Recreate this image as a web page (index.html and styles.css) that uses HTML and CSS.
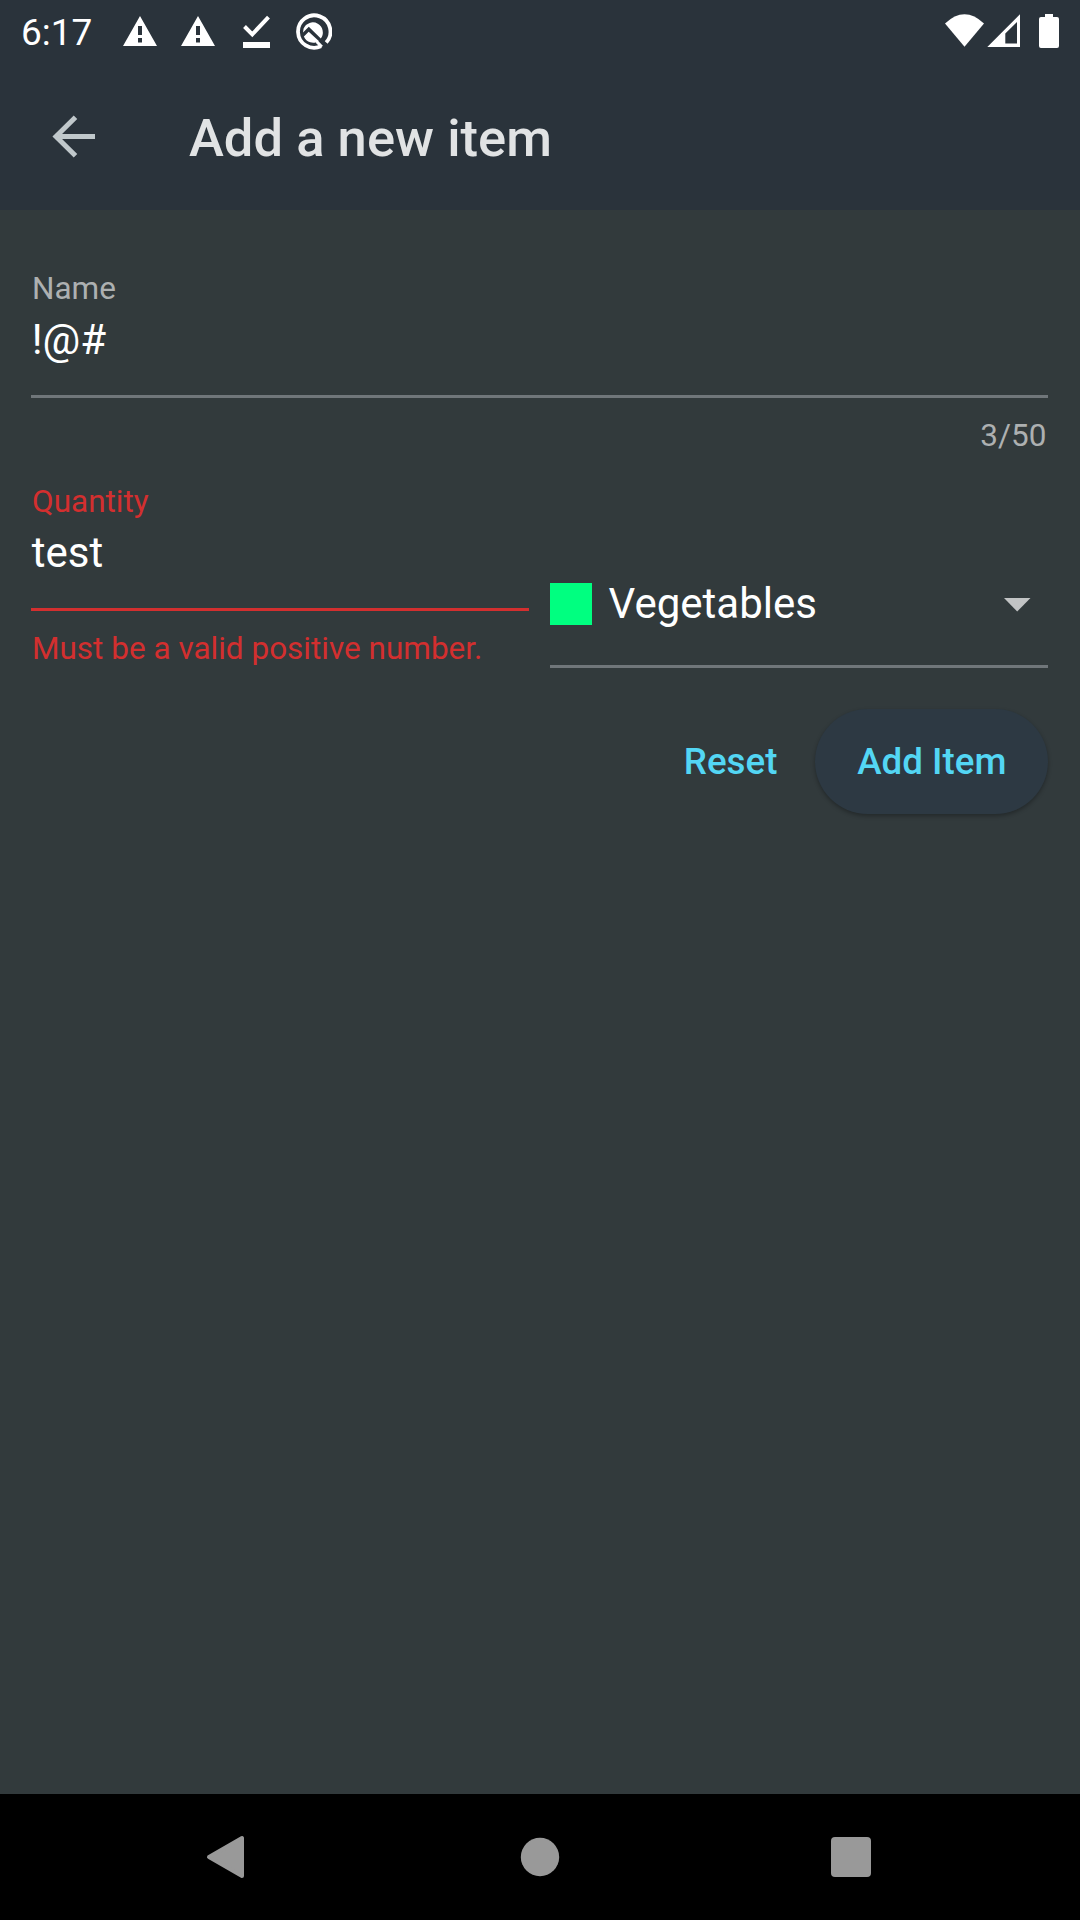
FILE: index.html
```html
<!DOCTYPE html>
<html lang="en">
<head>
<meta charset="utf-8">
<title>Add a new item</title>
<link rel="stylesheet" href="styles.css">
</head>
<body>
<div class="screen">
  <div class="status-bar">
    <span class="clock">6:17</span>
    <div class="notifications">
      <svg width="36" height="36" viewBox="122 13 36 36"><path fill="#fff" fill-rule="evenodd" d="M140 16 157 46H123ZM138 26V35H142V26ZM138 38V42.500H142V38Z"/></svg>
      <svg width="36" height="36" viewBox="122 13 36 36"><path fill="#fff" fill-rule="evenodd" d="M140 16 157 46H123ZM138 26V35H142V26ZM138 38V42.500H142V38Z"/></svg>
      <svg width="36" height="36" viewBox="238 13 36 36"><path fill="none" stroke="#fff" stroke-width="4" d="M244.500 26.500 252.300 34.300 268.500 17.200"/><path fill="#fff" d="M243 42H270V48H243Z"/></svg>
      <svg width="38" height="38" viewBox="295 12 38 38"><path fill="none" stroke="#fff" stroke-width="3.800" d="M322 45.300A16.200 16.200 0 1 1 327.200 41.500"/><path fill="none" stroke="#fff" stroke-width="3" d="M317.700 40.600 322.800 45.700"/><path fill="#fff" d="M304.600 27.500A10 10 0 1 1 321.800 37.400L309.800 25.700 304 31.500ZM309.700 30.700 319.800 40.100A10 10 0 0 1 304.900 35.500Z"/></svg>
    </div>
    <div class="system">
      <svg width="40" height="36" viewBox="944 13 40 36"><path fill="#fff" d="M945 23.500Q964.500 5 984 23.500L964.500 46.700Z"/></svg>
      <svg width="34" height="36" viewBox="987 13 34 36"><path fill="#fff" fill-rule="evenodd" d="M987.300 47 1020 14.300V47ZM1005.300 33.500V43.500H1017V22Z"/></svg>
      <svg width="20" height="36" viewBox="1039 13 20 36"><path fill="#fff" d="M1045 14H1053V17H1057Q1059 17 1059 19V46Q1059 48 1057 48H1041Q1039 48 1039 46V19Q1039 17 1041 17H1045Z"/></svg>
    </div>
  </div>
  <header class="app-bar">
    <svg class="back" width="44" height="44" viewBox="51 114 44 44"><path fill="none" stroke="#c0c8cb" stroke-width="5" d="M95 136.500H56M75.500 117.200 56 136.500 75.500 155.800"/></svg>
    <h1 class="title">Add a new item</h1>
  </header>
  <main class="form">
    <div class="field">
      <div class="label">Name</div>
      <div class="value">!@#</div>
      <div class="counter">3/50</div>
    </div>
    <div class="row">
      <div class="field invalid">
        <div class="label">Quantity</div>
        <div class="value">test</div>
        <div class="message">Must be a valid positive number.</div>
      </div>
      <div class="select">
        <span class="swatch"></span>
        <span class="option">Vegetables</span>
        <svg class="caret" width="27" height="14" viewBox="0 0 27 14"><path fill="#c2c4c5" d="M0 0H26.500L13.200 13.500Z"/></svg>
      </div>
    </div>
    <div class="actions">
      <span class="button text">Reset</span>
      <span class="button raised">Add Item</span>
    </div>
  </main>
  <nav class="nav-bar">
    <svg width="44" height="44" viewBox="203 1835 44 44"><path fill="#999" stroke="#999" stroke-width="4" stroke-linejoin="round" d="M209 1857 242 1838V1876Z"/></svg>
    <svg width="44" height="44" viewBox="0 0 44 44"><circle cx="24" cy="22" r="19.200" fill="#999"/></svg>
    <svg width="44" height="44" viewBox="829 1835 44 44"><rect x="831" y="1837" width="40" height="40" rx="4" fill="#999"/></svg>
  </nav>
</div>
</body>
</html>
```
FILE: styles.css
```css
* { box-sizing: border-box; }
body { margin: 0; font-family: Roboto, sans-serif; background: #323a3c; }
svg { display: block; flex: none; }
.screen { width: 1080px; height: 1920px; display: flex; flex-direction: column; background: #323a3c; overflow: hidden; }
.status-bar { height: 63px; display: flex; align-items: flex-start; padding: 12px 21px 0 21px; background: #2a333b; }
.clock { width: 101px; font-size: 37px; line-height: 42px; color: #fff; }
.notifications { display: flex; gap: 22px; padding-top: 1px; }
.notifications svg:last-child { margin: 0 0 0 -2px; }
.system { display: flex; gap: 3px; margin-left: auto; padding-top: 1px; }
.system svg:last-child { margin-left: 15px; }
.app-bar { height: 147px; display: flex; align-items: flex-start; padding: 51px 0 0 51px; background: #2a333b; }
.title { margin: -6px 0 0 94px; font-size: 52.5px; line-height: 60px; font-weight: 500; letter-spacing: .04px; color: #e1e3e4; }
.form { flex: 1; padding: 60px 31.6px 0 31.4px; }
.label, .counter, .message { padding: 0 2px 0 .6px; font-size: 31.5px; line-height: 36px; color: #adb0b1; }
.label { padding-top: 1px; margin-bottom: 7.5px; }
.value { height: 83px; padding-left: .3px; border-bottom: 3px solid #70767a; font-size: 42px; line-height: 50px; color: #fff; }
.counter { margin-top: 20.5px; text-align: right; }
.row { display: grid; grid-template-columns: 1fr 1fr; gap: 21px; margin-top: 29px; }
.invalid .label, .invalid .message { color: #d32f2f; }
.invalid .value { border-color: #d32f2f; }
.message { margin-top: 20px; white-space: nowrap; }
.select { height: 106px; margin-top: 78.5px; padding: 21px 17.4px 0 0; display: flex; align-items: flex-start; border-bottom: 3px solid #70767a; }
.swatch { width: 42px; height: 42px; background: #00ff80; }
.option { margin: -4px auto 0 16.2px; font-size: 42px; line-height: 50px; color: #fff; }
.caret { margin-top: 15px; }
.actions { display: flex; justify-content: flex-end; margin-top: 41px; }
.button { height: 105px; font-size: 36.75px; font-weight: 500; line-height: 105px; color: #53d6f4; }
.text { padding: 0 37.7px; }
.raised { padding: 0 42px; border-radius: 53px; background: #2d3943; box-shadow: 0 2px 4px rgba(0, 0, 0, .3); }
.nav-bar { height: 126px; display: flex; align-items: center; justify-content: space-between; padding: 0 207px 0 203px; background: #000; }
```
